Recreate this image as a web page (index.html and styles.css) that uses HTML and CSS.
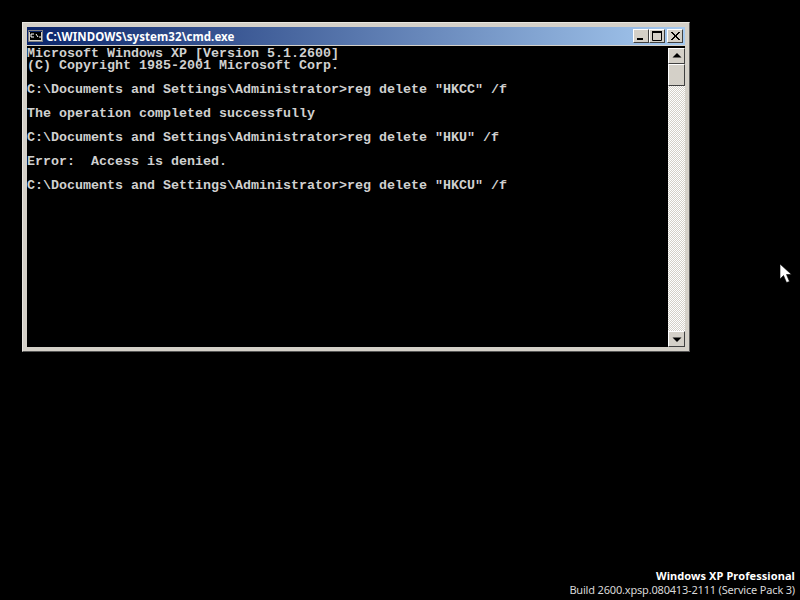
FILE: index.html
```html
<!DOCTYPE html>
<html lang="en">
<head>
<meta charset="utf-8">
<title>cmd.exe</title>
<link rel="stylesheet" href="styles.css">
</head>
<body>
<div class="desktop">
  <div class="window">
    <div class="titlebar">
      <svg class="appicon" width="16" height="14" viewBox="0 0 16 14">
        <rect x="0.5" y="1.500" width="14" height="11" fill="#d4d0c8" stroke="#808080"/>
        <rect x="1" y="2" width="13" height="1" fill="#0a246a"/>
        <rect x="2" y="3" width="11" height="8" fill="#000"/>
        <path d="M3 5h3M3 5v3h3M8 5l2 3M11 8h2" stroke="#fff" fill="none"/>
      </svg>
      <span class="title">C:\WINDOWS\system32\cmd.exe</span>
      <div class="controls">
        <div class="btn"><svg width="16" height="14" viewBox="0 0 16 14"><rect x="4" y="9" width="6" height="2" fill="#000"/></svg></div>
        <div class="btn"><svg width="16" height="14" viewBox="0 0 16 14"><path d="M3.500 2.500h9v9h-9z" fill="none" stroke="#000"/><rect x="3" y="2" width="10" height="2" fill="#000"/></svg></div>
        <div class="btn close"><svg width="16" height="14" viewBox="0 0 16 14"><path d="M4 3l8 8M5 3l8 8M12 3l-8 8M13 3l-8 8" stroke="#000" fill="none"/></svg></div>
      </div>
    </div>
    <div class="body">
<pre class="console">Microsoft Windows XP [Version 5.1.2600]
(C) Copyright 1985-2001 Microsoft Corp.

C:\Documents and Settings\Administrator&gt;reg delete "HKCC" /f

The operation completed successfully

C:\Documents and Settings\Administrator&gt;reg delete "HKU" /f

Error:  Access is denied.

C:\Documents and Settings\Administrator&gt;reg delete "HKCU" /f</pre>
      <div class="scrollbar">
        <div class="sbtn"><svg width="16" height="16" viewBox="0 0 16 16"><path d="M8 5l4.500 4.500h-9z" fill="#000"/></svg></div>
        <div class="thumb"></div>
        <div class="track"></div>
        <div class="sbtn"><svg width="16" height="16" viewBox="0 0 16 16"><path d="M3.500 6.500h9L8 11z" fill="#000"/></svg></div>
      </div>
    </div>
  </div>
  <svg class="cursor" width="13" height="21" viewBox="0 0 13 21"><path d="M1 1v15l3.500-3.500 3 7 3-1-3-7h5z" fill="#fff" stroke="#000" stroke-width="0.6"/></svg>
  <div class="version">
    <div class="edition">Windows XP Professional</div>
    <div class="build">Build 2600.xpsp.080413-2111 (Service Pack 3)</div>
  </div>
</div>
</body>
</html>
```
FILE: styles.css
```css
html, body { margin: 0; padding: 0; background: #000; }
.desktop { position: relative; width: 800px; height: 600px; overflow: hidden; background: #000; }
.window {
  position: absolute; left: 22px; top: 22px; width: 668px; height: 330px;
  box-sizing: border-box; padding: 4px;
  background: #d4d0c8;
  border: 1px solid; border-color: #e8e6e0 #555 #555 #e8e6e0;
  display: flex; flex-direction: column;
}
.titlebar {
  height: 18px; flex: none; display: flex; align-items: center;
  background: linear-gradient(90deg, #0a246a, #a6caf0);
  padding: 0 2px 0 1px;
}
.appicon { flex: none; margin-right: 2px; }
.title { font: bold 11.5px "Noto Sans", sans-serif; color: #fff; white-space: nowrap; letter-spacing: 0.07px; }
.controls { margin-left: auto; display: flex; }
.btn, .sbtn {
  box-sizing: border-box; background: #d4d0c8;
  border: 1px solid; border-color: #fff #404040 #404040 #fff;
  display: flex; align-items: center; justify-content: center;
}
.btn { width: 16px; height: 14px; }
.btn svg { flex: none; margin: -1px; }
.close { margin-left: 2px; }
.body { flex: 1; display: flex; min-height: 0; margin-top: 1px; background: #000; }
.console {
  flex: 1; margin: 0; padding: 2px 0 0 0; color: #d0d0d0;
  font: bold 13.33px/12px "Liberation Mono", monospace; overflow: hidden;
}
.scrollbar { width: 17px; flex: none; display: flex; flex-direction: column; margin-top: 2px; }
.sbtn { height: 16px; flex: none; }
.sbtn svg { flex: none; margin: -1px; }
.thumb {
  height: 22px; flex: none; box-sizing: border-box; background: #d4d0c8;
  border: 1px solid; border-color: #fff #404040 #404040 #fff;
}
.track {
  flex: 1;
  background-color: #fff;
  background-image: conic-gradient(#d4d0c8 25%, #fff 0 50%, #d4d0c8 0 75%, #fff 0);
  background-size: 2px 2px;
}
.cursor { position: absolute; left: 779px; top: 263px; }
.version {
  position: absolute; right: 5px; bottom: 3px; text-align: right; color: #fff;
  font-family: "Noto Sans", sans-serif; font-size: 11px; line-height: 14px;
}
.edition { font-weight: bold; letter-spacing: 0.09px; }
.build { color: #d8d8d8; letter-spacing: -0.18px; }
```
